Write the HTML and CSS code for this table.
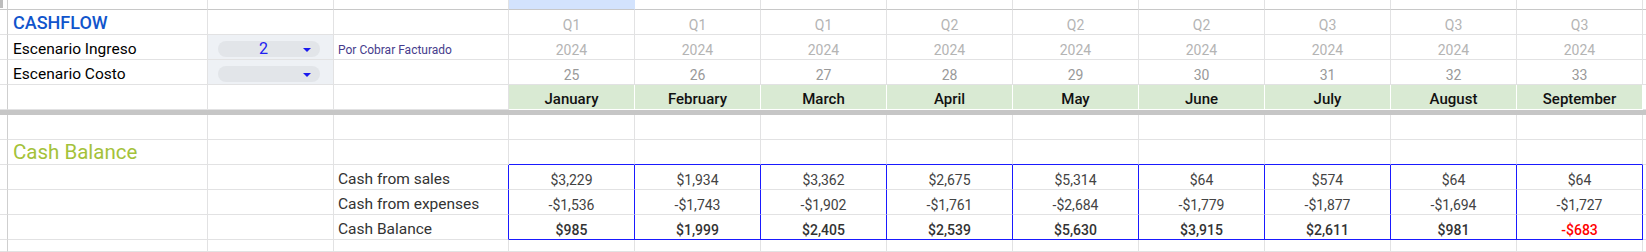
FILE: index.html
```html
<!DOCTYPE html>
<html lang="es">
<head>
<meta charset="utf-8">
<title>Cashflow</title>
<link rel="stylesheet" href="styles.css">
</head>
<body>
<div class="sheet">
  <div class="row row-top">
    <div class="c c0"><span class="mark"></span></div><div class="c"></div><div class="c"></div><div class="c"></div>
    <div class="c m sel"></div><div class="c m"></div><div class="c m"></div><div class="c m"></div><div class="c m"></div><div class="c m"></div><div class="c m"></div><div class="c m"></div><div class="c m"></div><div class="c tail"></div>
  </div>
  <div class="row">
    <div class="c c0"></div><div class="c lbl"><span class="title-blue">CASHFLOW</span></div><div class="c"></div><div class="c"></div>
    <div class="c m hq">Q1</div><div class="c m hq">Q1</div><div class="c m hq">Q1</div><div class="c m hq">Q2</div><div class="c m hq">Q2</div><div class="c m hq">Q2</div><div class="c m hq">Q3</div><div class="c m hq">Q3</div><div class="c m hq">Q3</div><div class="c tail"></div>
  </div>
  <div class="row">
    <div class="c c0"></div><div class="c lbl">Escenario Ingreso</div>
    <div class="c dd"><div class="pill"><span class="dd-val">2</span><span class="arrow"></span></div></div>
    <div class="c note">Por Cobrar Facturado</div>
    <div class="c m hq">2024</div><div class="c m hq">2024</div><div class="c m hq">2024</div><div class="c m hq">2024</div><div class="c m hq">2024</div><div class="c m hq">2024</div><div class="c m hq">2024</div><div class="c m hq">2024</div><div class="c m hq">2024</div><div class="c tail"></div>
  </div>
  <div class="row">
    <div class="c c0"></div><div class="c lbl">Escenario Costo</div>
    <div class="c dd"><div class="pill"><span class="dd-val"></span><span class="arrow"></span></div></div>
    <div class="c"></div>
    <div class="c m hn">25</div><div class="c m hn">26</div><div class="c m hn">27</div><div class="c m hn">28</div><div class="c m hn">29</div><div class="c m hn">30</div><div class="c m hn">31</div><div class="c m hn">32</div><div class="c m hn">33</div><div class="c tail"></div>
  </div>
  <div class="row">
    <div class="c c0"></div><div class="c"></div><div class="c"></div><div class="c"></div>
    <div class="c m month">January</div><div class="c m month">February</div><div class="c m month">March</div><div class="c m month">April</div><div class="c m month">May</div><div class="c m month">June</div><div class="c m month">July</div><div class="c m month">August</div><div class="c m month">September</div><div class="c tail"></div>
  </div>
  <div class="freeze"></div>
  <div class="row">
    <div class="c c0"></div><div class="c"></div><div class="c"></div><div class="c"></div>
    <div class="c m"></div><div class="c m"></div><div class="c m"></div><div class="c m"></div><div class="c m"></div><div class="c m"></div><div class="c m"></div><div class="c m"></div><div class="c m"></div><div class="c tail"></div>
  </div>
  <div class="row box-above">
    <div class="c c0"></div><div class="c lbl"><span class="title-green">Cash Balance</span></div><div class="c"></div><div class="c"></div>
    <div class="c m"></div><div class="c m"></div><div class="c m"></div><div class="c m"></div><div class="c m"></div><div class="c m"></div><div class="c m"></div><div class="c m"></div><div class="c m"></div><div class="c tail"></div>
  </div>
  <div class="row box">
    <div class="c c0"></div><div class="c"></div><div class="c"></div><div class="c lbl2">Cash from sales</div>
    <div class="c m num">$3,229</div><div class="c m num">$1,934</div><div class="c m num">$3,362</div><div class="c m num">$2,675</div><div class="c m num">$5,314</div><div class="c m num">$64</div><div class="c m num">$574</div><div class="c m num">$64</div><div class="c m num">$64</div><div class="c tail"></div>
  </div>
  <div class="row box">
    <div class="c c0"></div><div class="c"></div><div class="c"></div><div class="c lbl2">Cash from expenses</div>
    <div class="c m num">-$1,536</div><div class="c m num">-$1,743</div><div class="c m num">-$1,902</div><div class="c m num">-$1,761</div><div class="c m num">-$2,684</div><div class="c m num">-$1,779</div><div class="c m num">-$1,877</div><div class="c m num">-$1,694</div><div class="c m num">-$1,727</div><div class="c tail"></div>
  </div>
  <div class="row box box-last">
    <div class="c c0"></div><div class="c"></div><div class="c"></div><div class="c lbl2">Cash Balance</div>
    <div class="c m num strong">$985</div><div class="c m num strong">$1,999</div><div class="c m num strong">$2,405</div><div class="c m num strong">$2,539</div><div class="c m num strong">$5,630</div><div class="c m num strong">$3,915</div><div class="c m num strong">$2,611</div><div class="c m num strong">$981</div><div class="c m num strong neg">-$683</div><div class="c tail"></div>
  </div>
  <div class="row row-bottom">
    <div class="c c0"></div><div class="c"></div><div class="c"></div><div class="c"></div>
    <div class="c m"></div><div class="c m"></div><div class="c m"></div><div class="c m"></div><div class="c m"></div><div class="c m"></div><div class="c m"></div><div class="c m"></div><div class="c m"></div><div class="c tail"></div>
  </div>
</div>
</body>
</html>
```

FILE: styles.css
```css
html, body {
  margin: 0;
  padding: 0;
  background: #fff;
}
body {
  width: 1646px;
  height: 252px;
  overflow: hidden;
  font-family: Roboto, "Liberation Sans", sans-serif;
  color: #000;
}
.sheet {
  display: flex;
  flex-direction: column;
}
.row {
  display: grid;
  grid-template-columns: 8px 200px 126px 175px repeat(9, 126px) 3px;
  height: 25px;
}
.row-top { height: 10px; }
.row-bottom { height: 12px; }
.c {
  box-sizing: border-box;
  border-right: 1px solid #e2e2e3;
  border-bottom: 1px solid #e2e2e3;
  display: flex;
  align-items: flex-end;
  padding-bottom: 2px;
  line-height: 1;
  white-space: nowrap;
  overflow: visible;
  min-width: 0;
}
.c0 { border-right-color: #cfcfcf; padding: 0; align-items: stretch; }
.tail { border-right: none; }
.row-top .c { border-bottom-color: #c8c8c8; }
.mark {
  display: block;
  width: 3px;
  height: 8px;
  background: #bdbdbd;
}
.sel { background: #d3e3fd; border-right-color: #d3e3fd; }

.m { justify-content: center; }

.lbl {
  padding-left: 5px;
  font-size: 15.5px;
  color: #000;
}
.lbl2 {
  padding-left: 4px;
  font-size: 15.5px;
  color: #333;
}
.title-blue {
  font-size: 18px;
  font-weight: 500;
  color: #1155cc;
}
.title-green {
  font-size: 20.5px;
  color: #a4c23a;
}
.note {
  padding-left: 4px;
  padding-bottom: 3px;
  font-size: 12px;
  color: #463c8c;
}
.hq {
  font-size: 14px;
  color: #b4b4b4;
}
.hn {
  font-size: 14px;
  color: #999;
}
.month {
  background: #d9ead3;
  border-right-color: #fff;
  border-bottom-color: #fff;
  font-size: 15px;
  font-weight: 500;
  color: #111;
}

.dd {
  background: #eef1f5;
  padding: 0 13px 2px 10px;
}
.pill {
  flex: 1;
  height: 16px;
  border-radius: 8px;
  background: #e2e5e9;
  display: flex;
  align-items: center;
}
.dd-val {
  flex: 1;
  text-align: center;
  font-size: 16px;
  color: #2020f0;
  padding-left: 6px;
}
.arrow {
  width: 0;
  height: 0;
  border-left: 4px solid transparent;
  border-right: 4px solid transparent;
  border-top: 4px solid #1a1aee;
  margin: 2px 9px 0 0;
}

.freeze {
  height: 5px;
  background: #c6c6c6;
}

.num {
  font-size: 14px;
  color: #434343;
}
.strong { font-weight: 500; color: #333; }
.neg { color: #ff0000; }

.box-above .m { border-bottom-color: #1a1aff; }
.box .m { border-right-color: #1a1aff; }
.box .c:nth-child(4) { border-right-color: #1a1aff; }
.box-last .m { border-bottom-color: #1a1aff; }
```
